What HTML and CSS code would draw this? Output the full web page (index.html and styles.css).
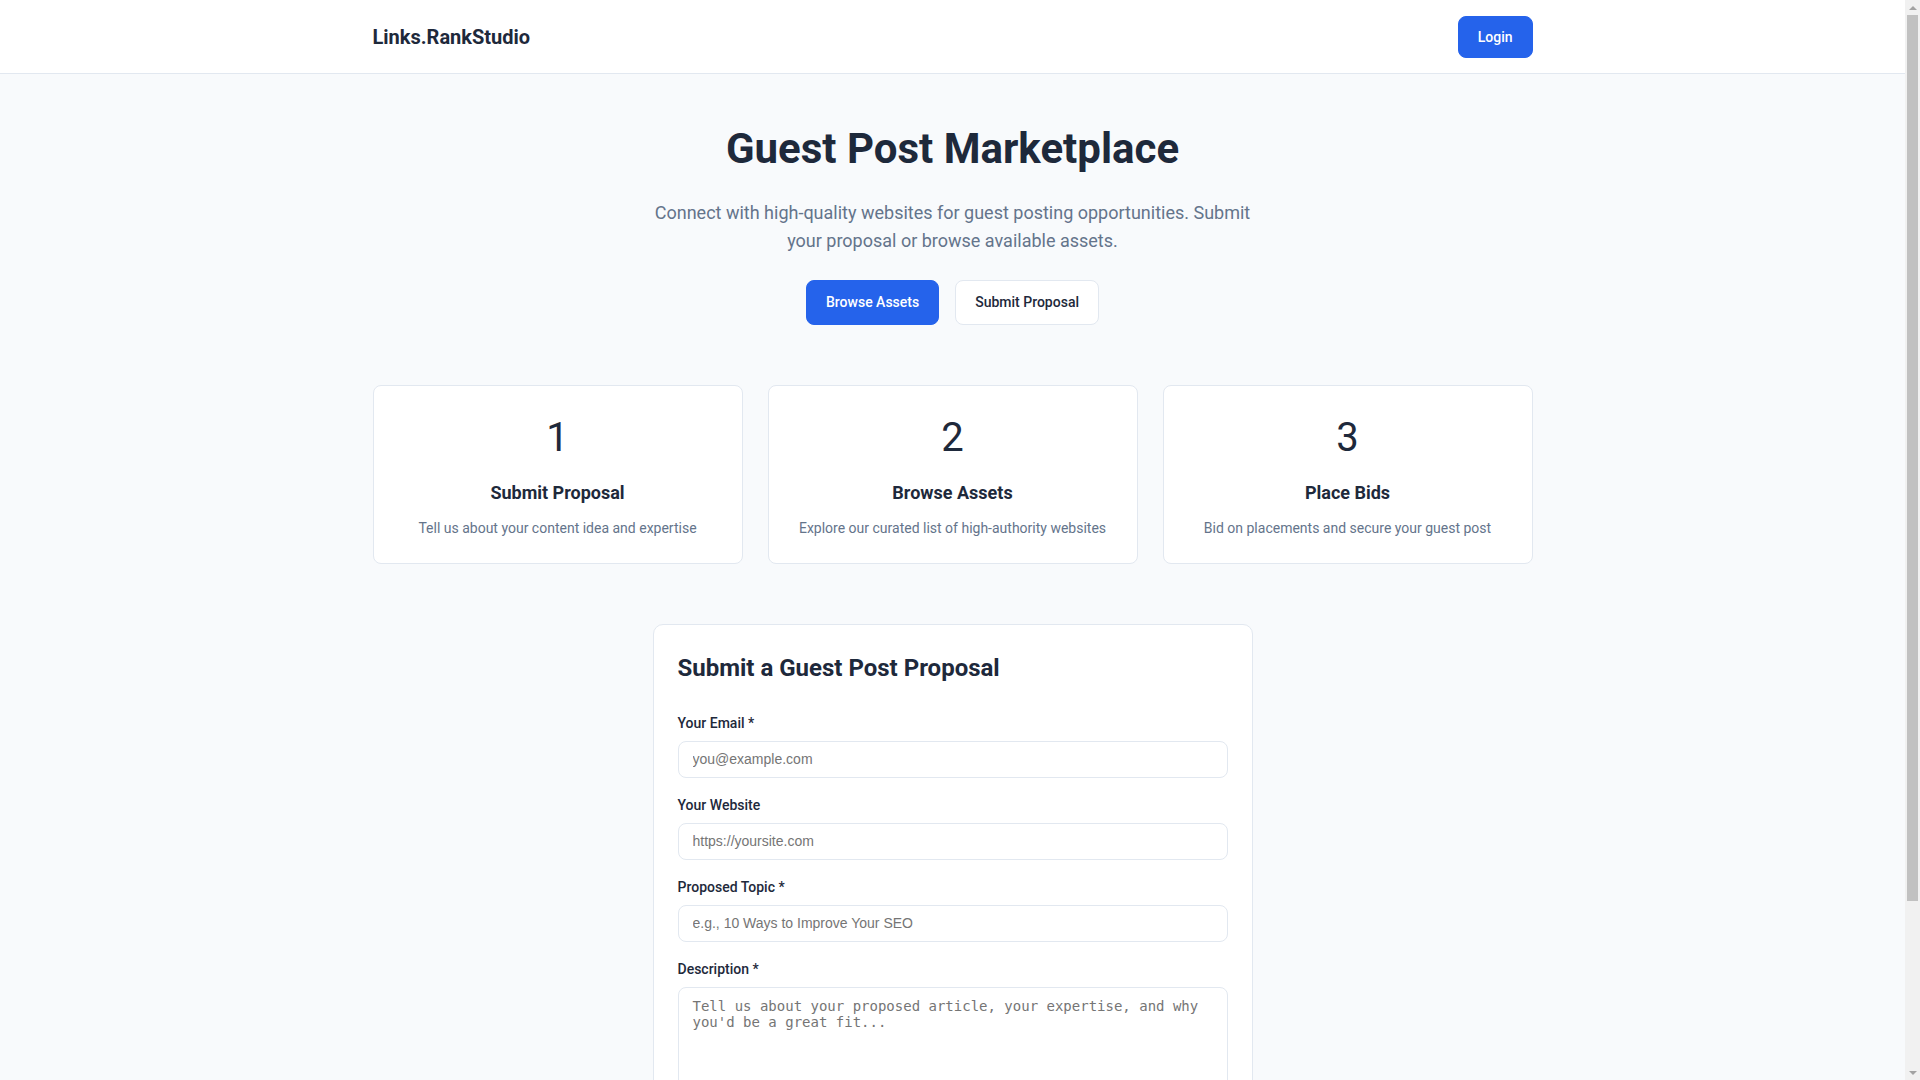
FILE: index.html
```html
<!DOCTYPE html>
<html lang="en">
<head>
<meta charset="utf-8">
<title>Links.RankStudio - Guest Post Marketplace</title>
<link rel="stylesheet" href="styles.css">
</head>
<body>
<header class="site-header">
  <div class="container header-inner">
    <a class="logo" href="#">Links.RankStudio</a>
    <button class="btn btn-primary btn-login">Login</button>
  </div>
</header>

<main class="container">
  <section class="hero">
    <h1 class="hero-title">Guest Post Marketplace</h1>
    <p class="hero-sub">Connect with high-quality websites for guest posting opportunities. Submit your proposal or browse available assets.</p>
    <div class="hero-actions">
      <button class="btn btn-primary btn-hero">Browse Assets</button>
      <button class="btn btn-outline btn-hero">Submit Proposal</button>
    </div>
  </section>

  <section class="steps">
    <div class="step-card">
      <div class="step-num">1</div>
      <h3 class="step-title">Submit Proposal</h3>
      <p class="step-desc">Tell us about your content idea and expertise</p>
    </div>
    <div class="step-card">
      <div class="step-num">2</div>
      <h3 class="step-title">Browse Assets</h3>
      <p class="step-desc">Explore our curated list of high-authority websites</p>
    </div>
    <div class="step-card">
      <div class="step-num">3</div>
      <h3 class="step-title">Place Bids</h3>
      <p class="step-desc">Bid on placements and secure your guest post</p>
    </div>
  </section>

  <section class="form-card">
    <h2 class="form-title">Submit a Guest Post Proposal</h2>
    <form class="form">
      <div class="field">
        <label class="label" for="email">Your Email *</label>
        <input class="input" id="email" type="email" placeholder="you@example.com">
      </div>
      <div class="field">
        <label class="label" for="site">Your Website</label>
        <input class="input" id="site" type="text" placeholder="https://yoursite.com">
      </div>
      <div class="field">
        <label class="label" for="topic">Proposed Topic *</label>
        <input class="input" id="topic" type="text" placeholder="e.g., 10 Ways to Improve Your SEO">
      </div>
      <div class="field">
        <label class="label" for="desc">Description *</label>
        <textarea class="textarea" id="desc" rows="6" placeholder="Tell us about your proposed article, your expertise, and why you'd be a great fit..."></textarea>
      </div>
      <button type="button" class="btn btn-primary btn-submit">Submit Proposal</button>
    </form>
  </section>
</main>

<div class="scrollbar" aria-hidden="true">
  <div class="sb-btn"><span class="sb-arrow-up"></span></div>
  <div class="sb-thumb"></div>
  <div class="sb-spacer"></div>
  <div class="sb-btn"><span class="sb-arrow-down"></span></div>
</div>
</body>
</html>
```

FILE: styles.css
```css
* {
  box-sizing: border-box;
}

body {
  margin: 0;
  padding-right: 15px;
  background: #f8fafc;
  color: #1e293b;
  font-family: Roboto, "Noto Sans", Arial, sans-serif;
}

.container {
  max-width: 1200px;
  margin: 0 auto;
  padding: 0 20px;
}

.site-header {
  background: #ffffff;
  border-bottom: 1px solid #e2e8f0;
}

.header-inner {
  height: 73px;
  display: flex;
  align-items: center;
  justify-content: space-between;
}

.logo {
  font-size: 20px;
  font-weight: 700;
  color: #1e293b;
  text-decoration: none;
}

.btn {
  font-family: Roboto, "Noto Sans", Arial, sans-serif;
  font-size: 14px;
  font-weight: 500;
  line-height: 20px;
  border-radius: 8px;
  border: 1px solid transparent;
  cursor: pointer;
}

.btn-primary {
  background: #2563eb;
  border-color: #2563eb;
  color: #ffffff;
}

.btn-outline {
  background: #ffffff;
  border-color: #e2e8f0;
  color: #1e293b;
}

.btn-login {
  padding: 10px 19px;
  margin-top: 1px;
}

.hero {
  padding-top: 50px;
  text-align: center;
}

.hero-title {
  margin: 0 0 25px;
  font-size: 42px;
  line-height: 1.2;
  font-weight: 700;
  color: #1e293b;
}

.hero-sub {
  max-width: 600px;
  margin: 0 auto 25px;
  font-size: 18px;
  line-height: 28px;
  color: #64748b;
}

.hero-actions {
  display: flex;
  justify-content: center;
  gap: 16px;
}

.btn-hero {
  padding: 12px 19px;
  line-height: 19px;
}

.steps {
  margin-top: 60px;
  display: grid;
  grid-template-columns: repeat(3, 1fr);
  gap: 25px;
}

.step-card {
  background: #ffffff;
  border: 1px solid #e2e8f0;
  border-radius: 8px;
  padding: 26px 24px 24px;
  text-align: center;
}

.step-num {
  font-size: 40px;
  line-height: 52px;
  font-weight: 400;
  color: #1e293b;
  margin-bottom: 15px;
}

.step-title {
  margin: 0 0 12px;
  font-size: 18px;
  line-height: 27px;
  font-weight: 700;
  color: #1e293b;
}

.step-desc {
  margin: 0;
  font-size: 14px;
  line-height: 21px;
  color: #64748b;
}

.form-card {
  max-width: 600px;
  margin: 60px auto 80px;
  background: #ffffff;
  border: 1px solid #e2e8f0;
  border-radius: 10px;
  padding: 25px 24px 24px;
}

.form-title {
  margin: 0 0 27px;
  font-size: 24px;
  line-height: 36px;
  font-weight: 700;
  color: #1e293b;
}

.form {
  display: flex;
  flex-direction: column;
  gap: 17px;
}

.field {
  display: flex;
  flex-direction: column;
}

.label {
  font-size: 14px;
  line-height: 21px;
  font-weight: 500;
  color: #1e293b;
  margin-bottom: 7px;
}

.input {
  font-family: "Liberation Sans", Arial, sans-serif;
  font-size: 14px;
  line-height: 17px;
  padding: 9px 14px;
  border: 1px solid #e2e8f0;
  border-radius: 8px;
  background: #ffffff;
  color: #1e293b;
}

.textarea {
  font-family: monospace;
  font-size: 14px;
  padding: 10px 14px;
  border: 1px solid #e2e8f0;
  border-radius: 8px;
  background: #ffffff;
  color: #1e293b;
  min-height: 120px;
}

.btn-submit {
  padding: 12px 20px;
  align-self: flex-start;
}

/* classic browser scrollbar drawn over the right edge */
.scrollbar {
  position: fixed;
  top: 0;
  right: 0;
  width: 15px;
  height: 100vh;
  background: #f1f1f1;
  display: flex;
  flex-direction: column;
}

.sb-btn {
  height: 15px;
  display: flex;
  align-items: center;
  justify-content: center;
  flex: none;
}

.sb-arrow-up {
  width: 0;
  height: 0;
  border-left: 4px solid transparent;
  border-right: 4px solid transparent;
  border-bottom: 4px solid #a3a3a3;
}

.sb-arrow-down {
  width: 0;
  height: 0;
  border-left: 4px solid transparent;
  border-right: 4px solid transparent;
  border-top: 4px solid #a3a3a3;
}

.sb-thumb {
  flex: none;
  height: 886px;
  margin: 0 2px;
  background: #c1c1c1;
}

.sb-spacer {
  flex: 1;
}
```
